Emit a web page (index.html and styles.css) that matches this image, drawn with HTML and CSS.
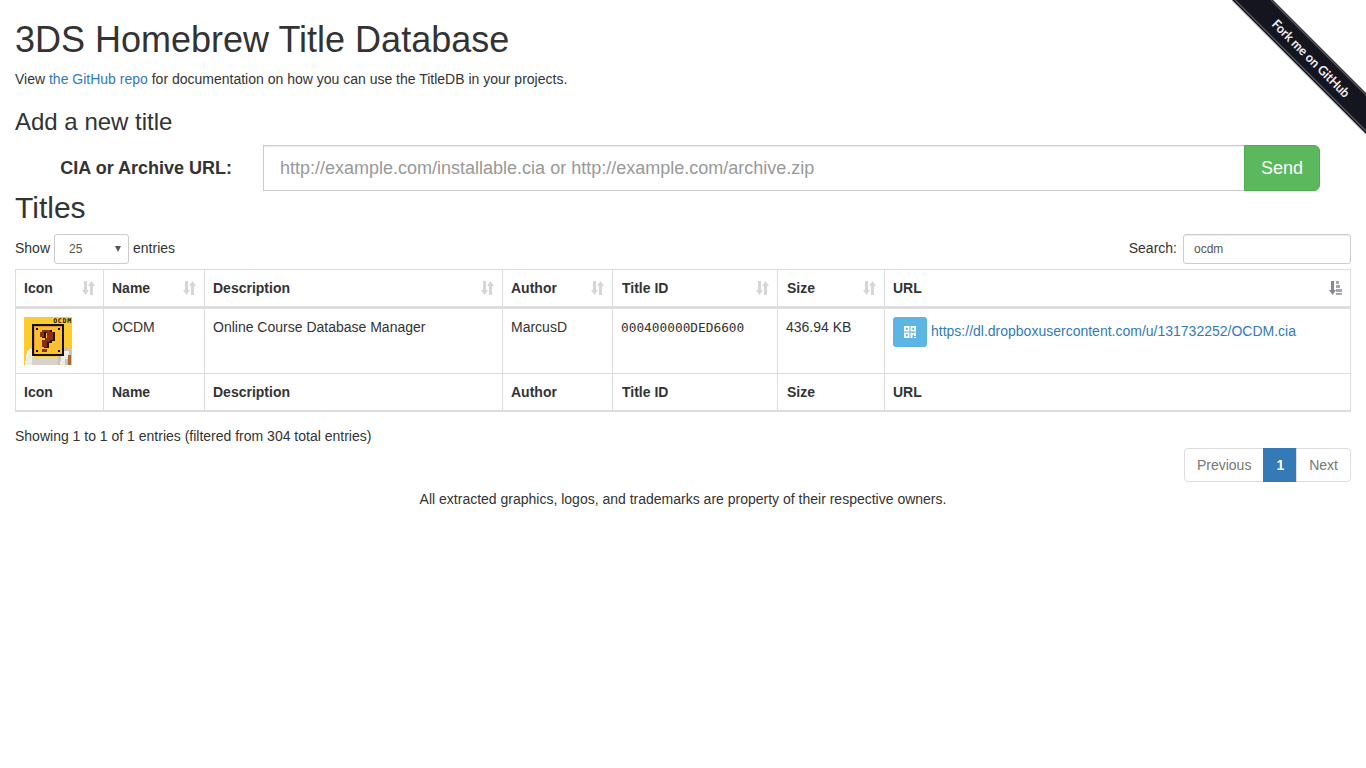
FILE: index.html
```html
<!DOCTYPE html>
<html lang="en">
<head>
<meta charset="utf-8">
<title>3DS Homebrew Title Database</title>
<link rel="stylesheet" href="styles.css">
</head>
<body>
<a class="ribbon" href="#">
<svg width="134" height="134" viewBox="0 0 134 134">
<polygon points="0,0 41,0 134,93 134,134" fill="#151520"/>
<line x1="3" y1="0" x2="134" y2="131" stroke="#555" stroke-width="1.4"/>
<line x1="39" y1="0" x2="134" y2="95" stroke="#555" stroke-width="1.4"/>
<line x1="-1" y1="0" x2="134" y2="135" stroke="#ddd" stroke-width="1"/>
<text x="0" y="0" transform="translate(39 25) rotate(45)" textLength="104" lengthAdjust="spacingAndGlyphs" class="ribbon-text">Fork me on GitHub</text>
</svg>
</a>
<div class="page">
<h1>3DS Homebrew Title Database</h1>
<p class="intro">View <a href="#">the GitHub repo</a> for documentation on how you can use the TitleDB in your projects.</p>
<h3>Add a new title</h3>
<form class="add-form">
<label class="add-label">CIA or Archive URL:</label>
<div class="add-group">
<input class="add-input" type="text" placeholder="http://example.com/installable.cia or http://example.com/archive.zip">
<button class="send" type="button">Send</button>
</div>
</form>
<h2>Titles</h2>
<div class="controls">
<label class="ctl">Show <span class="select"><span>25</span><i></i></span> entries</label>
<label class="ctl">Search: <input class="search" type="text" value="ocdm"></label>
</div>
<table>
<colgroup>
<col class="c1"><col class="c2"><col class="c3"><col class="c4"><col class="c5"><col class="c6"><col>
</colgroup>
<thead>
<tr>
<th>Icon<svg class="sort" viewBox="0 0 14 14"><use href="#both"/></svg></th>
<th>Name<svg class="sort" viewBox="0 0 14 14"><use href="#both"/></svg></th>
<th>Description<svg class="sort" viewBox="0 0 14 14"><use href="#both"/></svg></th>
<th>Author<svg class="sort" viewBox="0 0 14 14"><use href="#both"/></svg></th>
<th class="nudge">Title ID<svg class="sort" viewBox="0 0 14 14"><use href="#both"/></svg></th>
<th class="nudge">Size<svg class="sort" viewBox="0 0 14 14"><use href="#both"/></svg></th>
<th>URL<svg class="sort active" viewBox="0 0 14 14"><path d="M3 0h3v9h2l-3.5 5L1 9h2z"/><path class="bars" d="M8 0h3v3H8z M8 4h4v3H8z M8 8h6v3H8z M8 12h6v2H8z"/></svg></th>
</tr>
</thead>
<tbody>
<tr>
<td class="icon-cell">
<svg class="title-icon" width="48" height="48" viewBox="0 0 48 48" shape-rendering="crispEdges">
<rect width="48" height="48" fill="#fdcb2e"/>
<path d="M1 48l2-14 3-3 4 4v13z" fill="#efece6"/>
<path d="M8 48v-8h24l4 2v6z" fill="#d8d3ca"/>
<path d="M34 36l4-5 5-1 4 3v15H34z" fill="#c9c3b8"/>
<path d="M38 34h7v8h-4v6h-5z" fill="#efece6"/>
<path d="M44 38h3v10h-3z" fill="#a9683a"/>
<rect x="8" y="7" width="32" height="32" fill="#111"/>
<rect x="10" y="9" width="28" height="28" fill="#fbc02e"/>
<path d="M10 9h28v1H11v27h-1z" fill="#e8982a"/>
<rect x="12" y="11" width="2" height="2" fill="#111"/><rect x="34" y="11" width="2" height="2" fill="#111"/>
<rect x="12" y="33" width="2" height="2" fill="#111"/><rect x="34" y="33" width="2" height="2" fill="#111"/>
<path d="M18 15h2v-2h8v2h3v9h-3v2h-3v5h-5v-7h3v-2h2v-6h-3v5h-4z" fill="#2a120a"/>
<path d="M16 15h2v-2h8v2h3v8h-3v2h-3v5h-5v-7h3v-2h2v-6h-3v5h-4z" fill="#8a2e14"/>
<rect x="18" y="32" width="5" height="3" fill="#8a2e14"/>
</svg>
<span class="icon-tag">OCDM</span>
</td>
<td>OCDM</td>
<td>Online Course Database Manager</td>
<td>MarcusD</td>
<td><code>000400000DED6600</code></td>
<td>436.94 KB</td>
<td class="url-cell"><span class="qr"><svg width="12" height="12" viewBox="0 0 12 12"><path fill="#fff" fill-rule="evenodd" d="M0 0h5.5v5.5H0z M1.75 1.75v2h2v-2z M6.5 0H12v5.5H6.5z M8.25 1.75v2h2v-2z M0 6.5h5.5V12H0z M1.75 8.25v2h2v-2z M6.5 6.5h2v1h1.5v-1H12v3.5h-2V9H8.5v3h-2z M10 11h2v1h-2z"/></svg></span><a href="#">https://dl.dropboxusercontent.com/u/131732252/OCDM.cia</a></td>
</tr>
</tbody>
<tfoot>
<tr><th>Icon</th><th>Name</th><th>Description</th><th>Author</th><th class="nudge">Title ID</th><th class="nudge">Size</th><th>URL</th></tr>
</tfoot>
</table>
<div class="info">Showing 1 to 1 of 1 entries (filtered from 304 total entries)</div>
<div class="pager-row">
<ul class="pager"><li>Previous</li><li class="on">1</li><li>Next</li></ul>
</div>
<p class="legal">All extracted graphics, logos, and trademarks are property of their respective owners.</p>
</div>
<svg class="defs" width="0" height="0"><defs><g id="both"><path d="M3 0h3v9h2l-3.5 5L1 9h2z"/><path d="M9 14V5H7l3.5-5L14 5h-2v9z"/></g></defs></svg>
</body>
</html>
```
FILE: styles.css
```css
* { box-sizing: border-box; }
html, body { margin: 0; padding: 0; }
body {
  font-family: "Liberation Sans", Arial, sans-serif;
  font-size: 14px;
  line-height: 20px;
  color: #333;
  background: #fff;
}
a { color: #337ab7; text-decoration: none; }
.page { padding: 0 15px; }
h1, h2, h3 { font-weight: 500; color: #333; margin: 0; line-height: 1.1; }
h1 { font-size: 36px; margin: 20px 0 9px; }
.intro { margin: 0 0 10px; }
h3 { font-size: 24px; margin: 20px 0 10px; }
h2 { font-size: 30px; margin: 0 0 10px; }
.add-form { display: flex; align-items: center; }
.add-label {
  width: 217px;
  font-weight: 700;
  font-size: 18px;
  line-height: 46px;
  text-align: right;
  flex: none;
}
.add-group { display: flex; width: 1057px; margin-left: 31px; height: 46px; }
.add-input {
  flex: 1;
  min-width: 0;
  height: 46px;
  padding: 11px 16px 9px;
  font: 18px/1.33 "Liberation Sans", Arial, sans-serif;
  color: #555;
  border: 1px solid #ccc;
  border-right: 0;
  border-radius: 0;
  box-shadow: inset 0 1px 1px rgba(0,0,0,.075);
  outline: 0;
}
.add-input::placeholder { color: #999; opacity: 1; }
.send {
  width: 76px;
  height: 46px;
  font: 18px "Liberation Sans", Arial, sans-serif;
  color: #fff;
  background: #5cb85c;
  border: 1px solid #4cae4c;
  border-radius: 0 6px 6px 0;
  padding: 1px 0 0;
}
.controls { display: flex; justify-content: space-between; align-items: flex-start; height: 30px; margin-bottom: 5px; }
.ctl { display: flex; align-items: flex-start; gap: 4px; font-weight: 400; line-height: 28px; }
.select {
  display: flex;
  align-items: center;
  justify-content: space-between;
  width: 75px;
  height: 30px;
  padding: 0 7px 0 14px;
  font-size: 12px;
  color: #555;
  background: #fff;
  border: 1px solid #ccc;
  border-radius: 3px;
}
.select i { width: 0; height: 0; border: 3.5px solid transparent; border-top: 6px solid #555; border-bottom: 0; }
.search {
  width: 168px;
  height: 30px;
  padding: 5px 10px;
  font: 12px "Liberation Sans", Arial, sans-serif;
  color: #555;
  border: 1px solid #ccc;
  border-radius: 3px;
  box-shadow: inset 0 1px 1px rgba(0,0,0,.075);
  margin-left: 2px;
  outline: 0;
}
table {
  width: 1336px;
  border-collapse: separate;
  border-spacing: 0;
  table-layout: fixed;
  border: 1px solid #ddd;
}
.c1 { width: 88px; } .c2 { width: 101px; } .c3 { width: 298px; }
.c4 { width: 110px; } .c5 { width: 165px; } .c6 { width: 107px; }
th, td { padding: 8px; text-align: left; vertical-align: top; border-right: 1px solid #ddd; }
th:last-child, td:last-child { border-right: 0; }
th.nudge { padding-left: 9px; }
thead th { border-bottom: 3px solid #ddd; position: relative; font-weight: 700; }
tfoot th { border-top: 1px solid #ddd; border-bottom: 1px solid #ddd; }
.sort { position: absolute; right: 8px; top: 11px; width: 14px; height: 14px; fill: #d6d6d6; }
.sort.active { fill: #8c8692; }
.sort .bars { fill: #aaa4ae; }
td { height: 64px; }
.icon-cell { position: relative; }
.title-icon { display: block; }
.icon-tag {
  position: absolute;
  right: 31px;
  top: 9px;
  font: 700 6.5px/6px "DejaVu Sans Mono", monospace;
  letter-spacing: .8px;
  color: #111;
}
code { font: 12.8px/20px "DejaVu Sans Mono", monospace; color: #333; }
.url-cell { white-space: nowrap; }
.qr {
  display: inline-flex;
  align-items: center;
  justify-content: center;
  width: 34px;
  height: 30px;
  background: #5cb5e2;
  border-radius: 3px;
  vertical-align: middle;
  margin-right: 4px;
}
.info { padding-top: 14px; height: 36px; }
.pager-row { display: flex; justify-content: flex-end; }
.pager { display: flex; list-style: none; margin: 0; padding: 0; }
.pager li {
  padding: 6px 12px;
  color: #777;
  border: 1px solid #ddd;
  margin-left: -1px;
  height: 34px;
}
.pager li:first-child { border-radius: 4px 0 0 4px; }
.pager li:last-child { border-radius: 0 4px 4px 0; }
.pager li.on { color: #fff; font-weight: 700; background: #337ab7; border-color: #337ab7; }
.legal { text-align: center; margin: 7px 0 0; }
.ribbon { position: absolute; top: 0; right: 0; width: 134px; height: 134px; display: block; }
.ribbon svg { display: block; }
.ribbon-text { font: 700 13px "Lato", sans-serif; fill: #eee; }
.defs { position: absolute; }
```
